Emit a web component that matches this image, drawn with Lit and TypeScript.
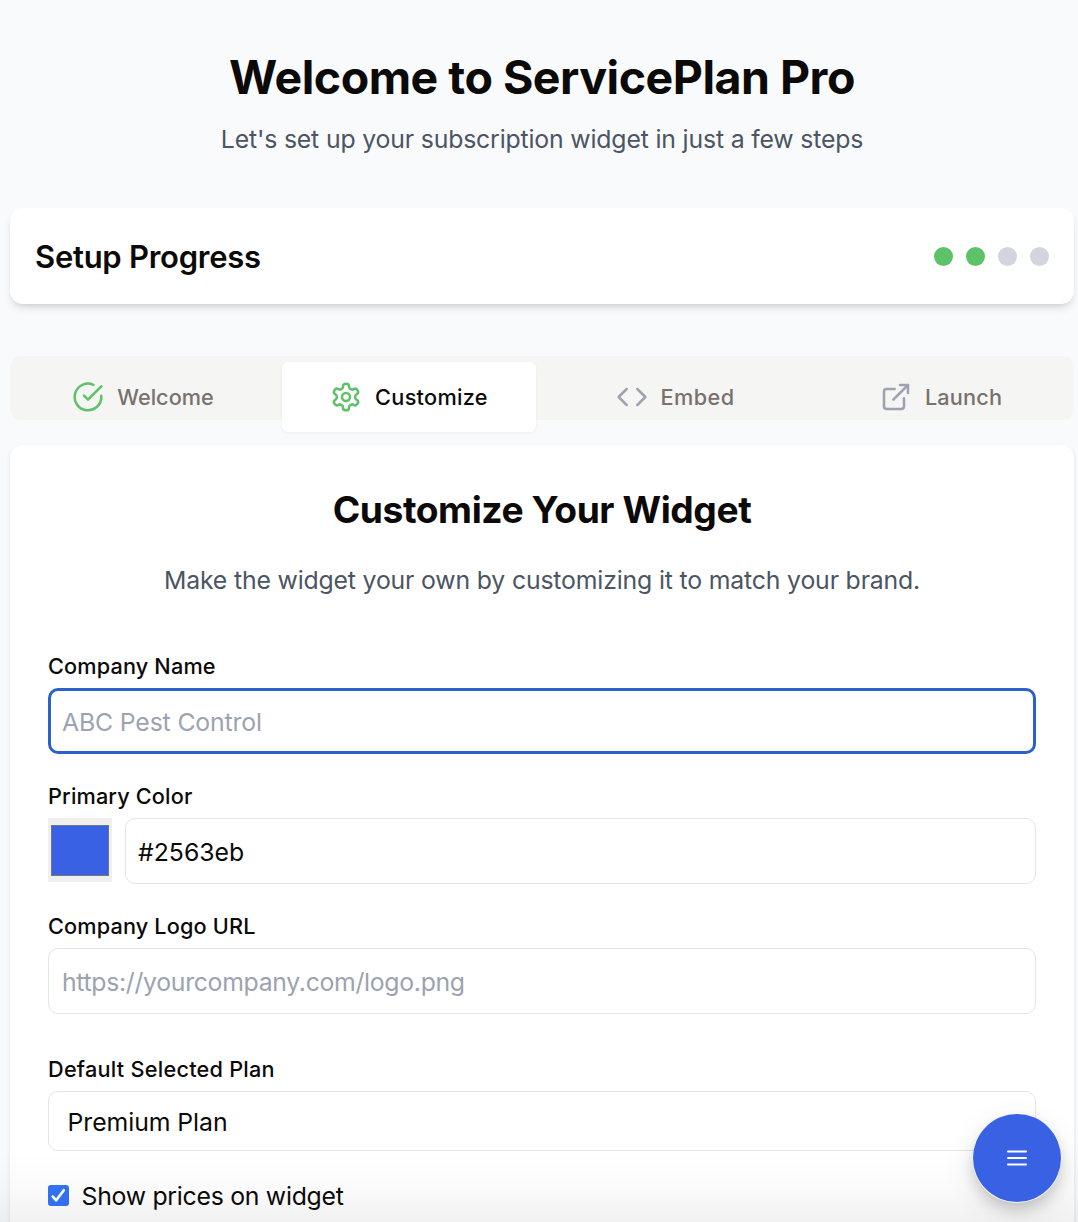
import { LitElement, html, css, svg } from "lit";
import { customElement, property } from "lit/decorators.js";
import { classMap } from "lit/directives/class-map.js";

const icons = {
  check: svg`<path d="M22 11.08V12a10 10 0 1 1-5.93-9.14"/><path d="m9 11 3 3L22 4"/>`,
  gear: svg`<path d="M12.22 2h-.44a2 2 0 0 0-2 2v.18a2 2 0 0 1-1 1.73l-.43.25a2 2 0 0 1-2 0l-.15-.08a2 2 0 0 0-2.73.73l-.22.38a2 2 0 0 0 .73 2.73l.15.1a2 2 0 0 1 1 1.72v.51a2 2 0 0 1-1 1.74l-.15.09a2 2 0 0 0-.73 2.73l.22.38a2 2 0 0 0 2.73.73l.15-.08a2 2 0 0 1 2 0l.43.25a2 2 0 0 1 1 1.73V20a2 2 0 0 0 2 2h.44a2 2 0 0 0 2-2v-.18a2 2 0 0 1 1-1.73l.43-.25a2 2 0 0 1 2 0l.15.08a2 2 0 0 0 2.73-.73l.22-.39a2 2 0 0 0-.73-2.73l-.15-.08a2 2 0 0 1-1-1.74v-.5a2 2 0 0 1 1-1.74l.15-.09a2 2 0 0 0 .73-2.73l-.22-.38a2 2 0 0 0-2.73-.73l-.15.08a2 2 0 0 1-2 0l-.43-.25a2 2 0 0 1-1-1.73V4a2 2 0 0 0-2-2z"/><circle cx="12" cy="12" r="3"/>`,
  code: svg`<path d="m16 18 6-6-6-6"/><path d="m8 6-6 6 6 6"/>`,
  launch: svg`<path d="M15 3h6v6"/><path d="M10 14 21 3"/><path d="M18 13v6a2 2 0 0 1-2 2H5a2 2 0 0 1-2-2V8a2 2 0 0 1 2-2h6"/>`,
};

type IconName = keyof typeof icons;

interface Step {
  id: string;
  label: string;
  icon: IconName;
  reached: boolean;
}

const steps: Step[] = [
  { id: "welcome", label: "Welcome", icon: "check", reached: true },
  { id: "customize", label: "Customize", icon: "gear", reached: true },
  { id: "embed", label: "Embed", icon: "code", reached: false },
  { id: "launch", label: "Launch", icon: "launch", reached: false },
];

@customElement("step-tabs")
class StepTabs extends LitElement {
  @property() active = "customize";

  static styles = css`
    :host { display: block; }
    .tabs {
      display: grid;
      grid-template-columns: repeat(4, 1fr);
      column-gap: 12px;
      box-sizing: border-box;
      height: 64px;
      padding: 6px;
      border-radius: 10px;
      background: #f5f5f4;
    }
    .tab {
      display: flex;
      align-items: center;
      justify-content: center;
      gap: 13px;
      height: 70px;
      border-radius: 6px;
      color: #78716c;
      font-size: 21.7px;
      font-weight: 500;
      line-height: 32px;
    }
    .tab.active {
      background: #fff;
      color: #0c0a09;
      box-shadow: 0 1px 3px rgba(0, 0, 0, 0.06);
    }
    .icon {
      width: 32px;
      height: 32px;
      fill: none;
      stroke: #9ca3af;
      stroke-width: 1.9;
      stroke-linecap: round;
      stroke-linejoin: round;
    }
    .reached .icon { stroke: #5ec269; }
    .customize { letter-spacing: 0.3px; }
    .embed { letter-spacing: 0.4px; }
    .launch { letter-spacing: 0.16px; }
  `;

  render() {
    return html`<nav class="tabs">
      ${steps.map(
        (s) => html`<div class=${classMap({
          tab: true, [s.id]: true, active: s.id === this.active, reached: s.reached,
        })}>
          <svg class="icon" viewBox="0 0 24 24">${icons[s.icon]}</svg>
          <span>${s.label}</span>
        </div>`
      )}
    </nav>`;
  }
}

@customElement("app-root")
class AppRoot extends LitElement {
  static styles = css`
    :host {
      display: block;
      position: relative;
      box-sizing: border-box;
      height: 1222px;
      overflow: hidden;
      padding: 49px 4px 0 10px;
      background: #f9fafc;
      color: #0c0a09;
      font-family: Inter, "Liberation Sans", sans-serif;
    }
    h1, h2, h3, p { margin: 0; }
    .hero { text-align: center; height: 159px; }
    h1 {
      font-size: 46.5px;
      font-weight: 700;
      line-height: 56px;
      letter-spacing: -0.5px;
    }
    .lead {
      color: #4b5563;
      font-size: 24.8px;
      line-height: 40px;
      letter-spacing: -0.16px;
    }
    .hero .lead { margin-top: 14px; }
    .progress {
      display: flex;
      align-items: center;
      justify-content: space-between;
      box-sizing: border-box;
      height: 96px;
      padding: 0 25px;
      border-radius: 13px;
      background: #fff;
      box-shadow: 0 6px 10px -2px rgba(0, 0, 0, 0.1), 0 3px 6px -3px rgba(0, 0, 0, 0.14);
    }
    h3 {
      padding-top: 2px;
      font-size: 31px;
      font-weight: 600;
      line-height: 44px;
      letter-spacing: -0.265px;
    }
    .dots { display: flex; gap: 13px; }
    .dot { width: 19px; height: 19px; border-radius: 50%; background: #d2d5db; }
    .dot.done { background: #5ec269; }
    step-tabs { margin-top: 52px; }
    .panel {
      box-sizing: border-box;
      height: 860px;
      margin-top: 25px;
      padding: 37px 38px 0;
      border-radius: 13px;
      background: #fff;
      box-shadow: 0 2px 4px rgba(0, 0, 0, 0.1);
    }
    .intro { text-align: center; }
    h2 {
      font-size: 37.2px;
      font-weight: 700;
      line-height: 56px;
      letter-spacing: -0.42px;
    }
    .intro .lead { margin-top: 22px; }
    .form { display: flex; flex-direction: column; margin-top: 50px; }
    .field { display: flex; flex-direction: column; margin-bottom: 26px; }
    .field.loose { margin-bottom: 39px; }
    .name {
      height: 38px;
      font-size: 21.7px;
      font-weight: 500;
      line-height: 32px;
      letter-spacing: 0.15px;
    }
    .name.plan { letter-spacing: 0.24px; }
    .row { display: flex; gap: 13px; }
    .input {
      flex: 1;
      box-sizing: border-box;
      height: 66px;
      padding: 1px 12px 0;
      border: 1px solid #e4e4e6;
      border-radius: 10px;
      background: #fff;
      font-size: 24.8px;
      line-height: 64px;
    }
    .column { flex: none; }
    .placeholder { color: #9ca3af; }
    .focused {
      padding: 0 11px;
      border: 3px solid #2b62c9;
      line-height: 62px;
      letter-spacing: -0.15px;
    }
    .url { padding-left: 13px; letter-spacing: -0.31px; }
    .select { flex: none; height: 60px; padding: 1px 18.5px 0; line-height: 58px; letter-spacing: -0.06px; }
    .well {
      display: flex;
      align-items: center;
      justify-content: center;
      width: 64px;
      height: 64px;
      background: #efefef;
    }
    .swatch {
      box-sizing: border-box;
      width: 58px;
      height: 51px;
      border: 1px solid #77757a;
      background: #3862e3;
    }
    .option {
      display: flex;
      align-items: center;
      gap: 12.5px;
      margin-top: 26px;
      height: 38px;
      font-size: 24.8px;
      letter-spacing: -0.265px;
    }
    .box { width: 21px; height: 21px; margin-top: -1px; border-radius: 3px; background: #3273f6; }
    .box svg { display: block; }
    .field.last { margin-bottom: 0; }
    .fade {
      position: absolute;
      left: 0;
      right: 0;
      bottom: 0;
      height: 70px;
      background: linear-gradient(rgba(0, 0, 0, 0), rgba(0, 0, 0, 0.018) 55%, rgba(0, 0, 0, 0.055));
    }
    .fab {
      position: absolute;
      left: 973px;
      top: 1114px;
      display: flex;
      align-items: center;
      justify-content: center;
      width: 88px;
      height: 88px;
      border-radius: 50%;
      background: #3862e3;
      box-shadow: 0 0.5px 0 0.5px rgba(255, 255, 255, 0.85), 0 8px 16px -2px rgba(0, 0, 0, 0.2),
        0 10px 32px rgba(0, 0, 0, 0.09);
    }
  `;

  render() {
    return html`
      <header class="hero">
        <h1>Welcome to ServicePlan Pro</h1>
        <p class="lead">Let's set up your subscription widget in just a few steps</p>
      </header>
      <section class="progress">
        <h3>Setup Progress</h3>
        <div class="dots">
          ${steps.map((s) => html`<span class=${classMap({ dot: true, done: s.reached })}></span>`)}
        </div>
      </section>
      <step-tabs active="customize"></step-tabs>
      <main class="panel">
        <div class="intro">
          <h2>Customize Your Widget</h2>
          <p class="lead">Make the widget your own by customizing it to match your brand.</p>
        </div>
        <div class="form">
          <div class="field">
            <div class="name">Company Name</div>
            <div class="input column placeholder focused">ABC Pest Control</div>
          </div>
          <div class="field">
            <div class="name">Primary Color</div>
            <div class="row">
              <div class="well"><div class="swatch"></div></div>
              <div class="input">#2563eb</div>
            </div>
          </div>
          <div class="field loose">
            <div class="name">Company Logo URL</div>
            <div class="input column placeholder url">https://yourcompany.com/logo.png</div>
          </div>
          <div class="field last">
            <div class="name plan">Default Selected Plan</div>
            <div class="input select">Premium Plan</div>
          </div>
          <div class="option">
            <span class="box">
              <svg width="21" height="21" viewBox="0 0 21 21" fill="none" stroke="#fff" stroke-width="2.7" stroke-linecap="round" stroke-linejoin="round">
                <path d="M4.8 11.6 8.2 15.2 15.8 5.2" />
              </svg>
            </span>
            <span>Show prices on widget</span>
          </div>
        </div>
      </main>
      <div class="fade"></div>
      <div class="fab">
        <svg width="22" height="18" viewBox="0 0 22 18" stroke="#fff" stroke-width="2" stroke-linecap="round">
          <path d="M2 2.5h18M2 9h18M2 15.5h18" />
        </svg>
      </div>
    `;
  }
}
